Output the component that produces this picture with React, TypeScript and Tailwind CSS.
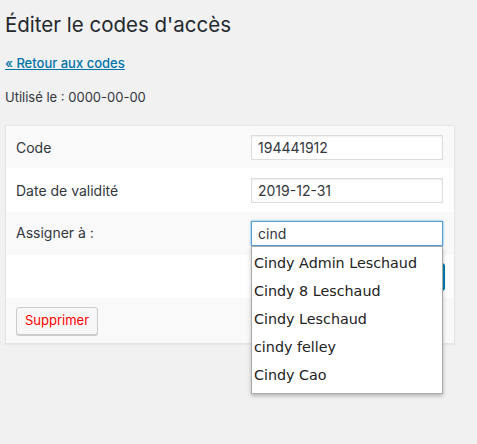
export default function App() {
  const users = ['Cindy Admin Leschaud', 'Cindy 8 Leschaud', 'Cindy Leschaud', 'cindy felley', 'Cindy Cao']

  return (
    <div className="w-[477px] h-[444px] bg-[#f1f1f1] text-[#23282d] overflow-hidden" style={{ fontFamily: 'Inter, "Liberation Sans", sans-serif' }}>
      <div className="pl-[5px] pt-[10px]">
        <h1 className="text-[20.5px] leading-[29px] font-normal text-[#23282d]">Éditer le codes d'accès</h1>
        <p className="mt-[15px] text-[13px] leading-[18px]">
          <a href="#" className="text-[#0073aa] underline font-medium">« Retour aux codes</a>
        </p>
        <p className="mt-[16px] text-[13px] leading-[18px] text-[#32373c]">Utilisé le : 0000-00-00</p>

        {/* Form card */}
        <div className="mt-[19px] w-[450px] border border-[#e5e5e5] bg-white shadow-[0_1px_1px_rgba(0,0,0,0.04)]">
          <div className="h-[42px] flex items-center bg-[#f9f9f9]">
            <span className="pl-[10px] w-[245px] text-[14px] text-[#32373c]">Code</span>
            <div className="w-[192px] h-[25px] border border-[#ddd] bg-white shadow-[inset_0_1px_2px_rgba(0,0,0,0.07)] px-[6px] text-[14px] leading-[23px] text-[#32373c]">194441912</div>
          </div>
          <div className="h-[44px] flex items-center bg-white">
            <span className="pl-[10px] w-[245px] text-[14px] text-[#32373c]">Date de validité</span>
            <div className="w-[192px] h-[25px] border border-[#ddd] bg-white shadow-[inset_0_1px_2px_rgba(0,0,0,0.07)] px-[6px] text-[14px] leading-[23px] text-[#32373c]">2019-12-31</div>
          </div>
          <div className="h-[43px] flex items-center bg-[#f9f9f9]">
            <span className="pl-[10px] w-[245px] text-[14px] text-[#32373c] -mt-[2px]">Assigner à :</span>
            <div className="relative w-[192px] h-[25px] border border-[#5b9dd9] bg-white shadow-[0_0_2px_rgba(30,140,190,0.8)] px-[6px] text-[14px] leading-[23px] text-[#32373c]">
              cind
              <ul
                className="absolute left-[-1px] top-[24px] w-[192px] z-10 bg-white border border-[#aaa] shadow-[0_2px_4px_rgba(0,0,0,0.25)] pt-[2px] pb-[4px] text-[14.3px] text-[#222]"
                style={{ fontFamily: '"DejaVu Sans", Verdana, sans-serif' }}
              >
                {users.map((u) => (
                  <li key={u} className="h-[28px] leading-[28px] pl-[2px] whitespace-nowrap">{u}</li>
                ))}
              </ul>
            </div>
          </div>
          <div className="h-[43px] flex items-center justify-end pr-[9px] bg-white">
            <div className="w-[60px] h-[28px] rounded-[3px] bg-[#0085ba] border border-[#0073aa]" />
          </div>
          <div className="h-[45px] flex items-center bg-[#f9f9f9] pl-[10px]">
            <button className="h-[28px] px-[8px] rounded-[3px] border border-[#ccc] bg-[#f7f7f7] shadow-[0_1px_0_#ccc] text-[13px] text-[#ff0000]">Supprimer</button>
          </div>
        </div>
      </div>
    </div>
  )
}
